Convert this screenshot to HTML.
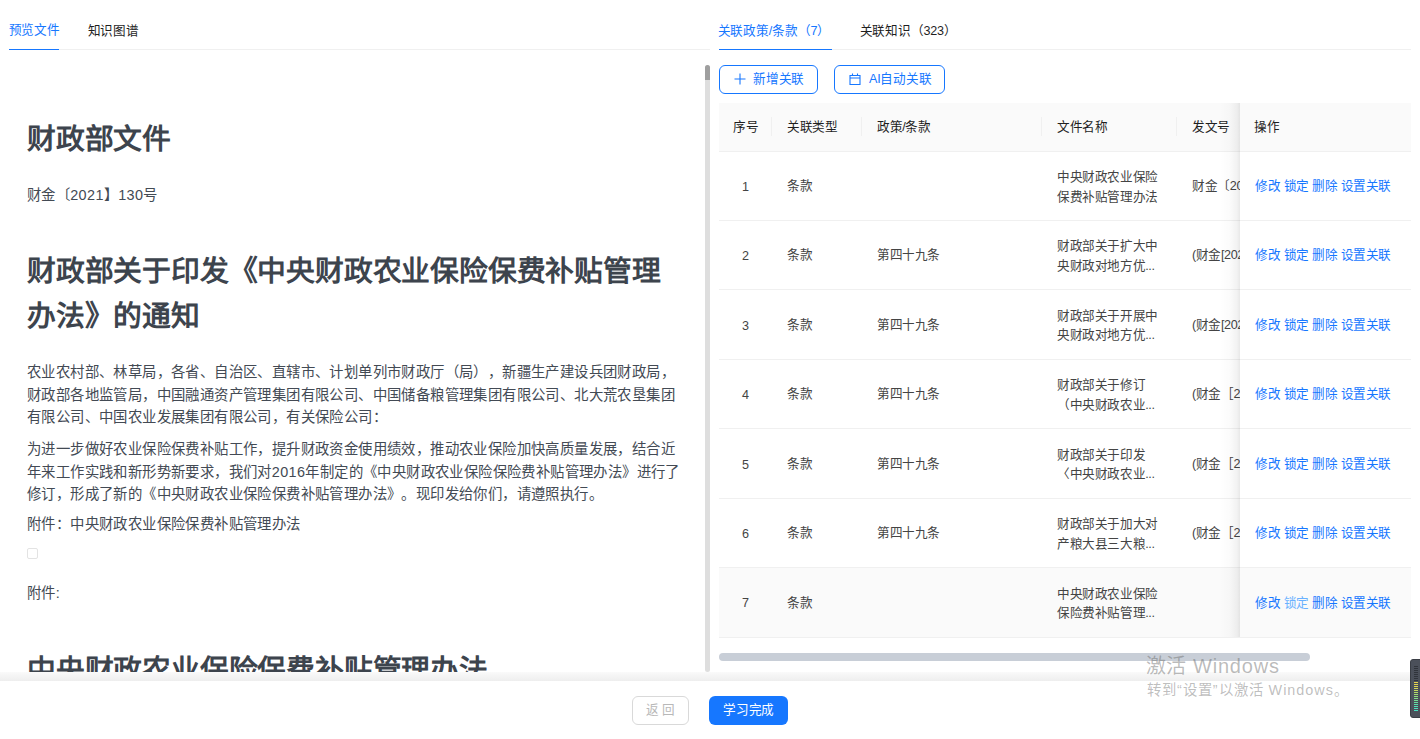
<!DOCTYPE html>
<html lang="zh-CN"><head><meta charset="utf-8">
<style>
*{margin:0;padding:0;box-sizing:border-box}
html,body{width:1420px;height:739px;overflow:hidden;background:#fff}
body{font-family:"Liberation Sans",sans-serif;position:relative;color:#1f1f1f;text-spacing-trim:space-all}
.a{position:absolute;white-space:nowrap}
.tab{font-size:12.6px;line-height:14px;letter-spacing:-0.2px}
.blue{color:#1677ff}
.p{font-size:14.4px;line-height:22.6px;color:#434a54;letter-spacing:0.4px}
.j{width:647px;text-align:justify;text-align-last:justify}
.h1{font-size:28.8px;line-height:45px;font-weight:bold;color:#3d444d;letter-spacing:-0.2px}
.th{font-size:12.6px;line-height:14px;color:#1f1f1f;letter-spacing:-0.4px}
.td{font-size:12.6px;line-height:14px;color:#444;letter-spacing:-0.4px}
.hl{position:absolute;height:1px;background:#f0f0f0}
.td2{font-size:12.6px;line-height:19.8px;color:#444;letter-spacing:-0.4px}
.ops{font-size:12.6px;line-height:14px;color:#1677ff;letter-spacing:-0.4px}
.ops span{margin-right:3.3px}
</style></head><body>
<div class="a tab blue" style="left:8.5px;top:23px">预览文件</div>
<div class="a tab" style="left:87.5px;top:23.5px">知识图谱</div>
<div class="hl" style="left:9px;top:49px;width:701px"></div>
<div class="a" style="left:9px;top:49px;width:50px;height:1px;background:#1677ff"></div>
<div class="a h1" style="left:27px;top:117px">财政部文件</div>
<div class="a p" style="left:27px;top:184px">财金〔2021】130号</div>
<div class="a h1" style="left:27px;top:249px">财政部关于印发《中央财政农业保险保费补贴管理</div>
<div class="a h1" style="left:27px;top:294px">办法》的通知</div>
<div class="a p j" style="left:27px;top:361px">农业农村部、林草局，各省、自治区、直辖市、计划单列市财政厅（局），新疆生产建设兵团财政局，</div>
<div class="a p j" style="left:27px;top:384px">财政部各地监管局，中国融通资产管理集团有限公司、中国储备粮管理集团有限公司、北大荒农垦集团</div>
<div class="a p" style="left:27px;top:406px">有限公司、中国农业发展集团有限公司，有关保险公司：</div>
<div class="a p j" style="left:27px;top:438px">为进一步做好农业保险保费补贴工作，提升财政资金使用绩效，推动农业保险加快高质量发展，结合近</div>
<div class="a p j" style="left:27px;top:461px">年来工作实践和新形势新要求，我们对2016年制定的《中央财政农业保险保险费补贴管理办法》进行了</div>
<div class="a p" style="left:27px;top:483px">修订，形成了新的《中央财政农业保险保费补贴管理办法》。现印发给你们，请遵照执行。</div>
<div class="a p" style="left:27px;top:513px">附件：中央财政农业保险保费补贴管理办法</div>
<div class="a" style="left:27px;top:548px;width:11px;height:11px;border:1px solid #e3e3e3;border-radius:2px"></div>
<div class="a p" style="left:27px;top:582px">附件:</div>
<div class="a" style="left:0;top:0;width:700px;height:672px;overflow:hidden"><div class="a h1" style="left:27px;top:648px">中央财政农业保险保费补贴管理办法</div></div>
<div class="a" style="left:705px;top:65px;width:5px;height:607px;background:#dedede;border-radius:3px"></div>
<div class="a" style="left:705px;top:65px;width:5px;height:15px;background:#9f9f9f;border-radius:3px 3px 0 0"></div>
<div class="a tab blue" style="left:717.5px;top:23.5px">关联政策/条款（7）</div>
<div class="a tab" style="left:859.5px;top:23.5px">关联知识（323）</div>
<div class="hl" style="left:719px;top:49px;width:692px"></div>
<div class="a" style="left:719px;top:49px;width:113px;height:1px;background:#1677ff"></div>
<div class="a" style="left:719px;top:65px;width:99px;height:29px;border:1px solid #1677ff;border-radius:6px"></div>
<div class="a tab blue" style="left:753px;top:72px">新增关联</div>
<div class="a" style="left:834px;top:65px;width:111px;height:29px;border:1px solid #1677ff;border-radius:6px"></div>
<div class="a tab blue" style="left:869px;top:72px">AI自动关联</div>
<div class="a" style="left:719px;top:103px;width:692px;height:48px;background:#fafafa"></div>
<div class="a th" style="left:733px;top:120px">序号</div>
<div class="a th" style="left:787px;top:120px">关联类型</div>
<div class="a th" style="left:877px;top:120px">政策/条款</div>
<div class="a th" style="left:1057px;top:120px">文件名称</div>
<div class="a th" style="left:1192px;top:120px">发文号</div>
<div class="a" style="left:771px;top:117px;width:1px;height:19px;background:#f0f0f0"></div>
<div class="a" style="left:861px;top:117px;width:1px;height:19px;background:#f0f0f0"></div>
<div class="a" style="left:1041px;top:117px;width:1px;height:19px;background:#f0f0f0"></div>
<div class="a" style="left:1176px;top:117px;width:1px;height:19px;background:#f0f0f0"></div>
<div class="a" style="left:1409px;top:117px;width:1px;height:19px;background:#f0f0f0"></div>
<div class="a" style="left:719px;top:568px;width:692px;height:69px;background:#fafafa"></div>
<div class="hl" style="left:719px;top:151px;width:692px"></div>
<div class="hl" style="left:719px;top:220px;width:692px"></div>
<div class="hl" style="left:719px;top:289px;width:692px"></div>
<div class="hl" style="left:719px;top:359px;width:692px"></div>
<div class="hl" style="left:719px;top:428px;width:692px"></div>
<div class="hl" style="left:719px;top:498px;width:692px"></div>
<div class="hl" style="left:719px;top:567px;width:692px"></div>
<div class="hl" style="left:719px;top:637px;width:692px"></div>
<div class="a" style="left:1176px;top:151px;width:64px;height:486px;overflow:hidden">
<div class="a td" style="left:16px;top:28.0px">财金〔2021】130号</div>
<div class="a td" style="left:16px;top:97.0px">(财金[2021]</div>
<div class="a td" style="left:16px;top:166.5px">(财金[2021]</div>
<div class="a td" style="left:16px;top:236.0px">(财金［2021］</div>
<div class="a td" style="left:16px;top:305.5px">(财金［2021］</div>
<div class="a td" style="left:16px;top:375.0px">(财金［2021］</div>
<div class="a td" style="left:16px;top:444.5px"></div>
</div>
<div class="a td" style="left:742px;top:180.0px">1</div>
<div class="a td" style="left:787px;top:179.0px">条款</div>
<div class="a td2" style="left:1057px;top:168.0px">中央财政农业保险<br>保费补贴管理办法</div>
<div class="a td" style="left:742px;top:249.0px">2</div>
<div class="a td" style="left:787px;top:248.0px">条款</div>
<div class="a td" style="left:877px;top:248.0px">第四十九条</div>
<div class="a td2" style="left:1057px;top:237.0px">财政部关于扩大中<br>央财政对地方优...</div>
<div class="a td" style="left:742px;top:318.5px">3</div>
<div class="a td" style="left:787px;top:317.5px">条款</div>
<div class="a td" style="left:877px;top:317.5px">第四十九条</div>
<div class="a td2" style="left:1057px;top:306.5px">财政部关于开展中<br>央财政对地方优...</div>
<div class="a td" style="left:742px;top:388.0px">4</div>
<div class="a td" style="left:787px;top:387.0px">条款</div>
<div class="a td" style="left:877px;top:387.0px">第四十九条</div>
<div class="a td2" style="left:1057px;top:376.0px">财政部关于修订<br>（中央财政农业...</div>
<div class="a td" style="left:742px;top:457.5px">5</div>
<div class="a td" style="left:787px;top:456.5px">条款</div>
<div class="a td" style="left:877px;top:456.5px">第四十九条</div>
<div class="a td2" style="left:1057px;top:445.5px">财政部关于印发<br>〈中央财政农业...</div>
<div class="a td" style="left:742px;top:527.0px">6</div>
<div class="a td" style="left:787px;top:526.0px">条款</div>
<div class="a td" style="left:877px;top:526.0px">第四十九条</div>
<div class="a td2" style="left:1057px;top:515.0px">财政部关于加大对<br>产粮大县三大粮...</div>
<div class="a td" style="left:742px;top:595.5px">7</div>
<div class="a td" style="left:787px;top:595.5px">条款</div>
<div class="a td2" style="left:1057px;top:584.5px">中央财政农业保险<br>保险费补贴管理...</div>
<div class="a" style="left:1220px;top:103px;width:20px;height:534px;background:linear-gradient(to right,rgba(0,0,0,0),rgba(0,0,0,0.015) 50%,rgba(0,0,0,0.05) 85%,rgba(0,0,0,0.09))"></div>
<div class="a" style="left:1240px;top:103px;width:171px;height:48px;background:#fafafa"></div>
<div class="a th" style="left:1254px;top:120px">操作</div>
<div class="a" style="left:1240px;top:152px;width:171px;height:68px;background:#fff"></div>
<div class="a ops" style="left:1255px;top:179.0px"><span>修改</span><span>锁定</span><span>删除</span><span>设置关联</span></div>
<div class="a" style="left:1240px;top:221px;width:171px;height:68px;background:#fff"></div>
<div class="a ops" style="left:1255px;top:248.0px"><span>修改</span><span>锁定</span><span>删除</span><span>设置关联</span></div>
<div class="a" style="left:1240px;top:290px;width:171px;height:69px;background:#fff"></div>
<div class="a ops" style="left:1255px;top:317.5px"><span>修改</span><span>锁定</span><span>删除</span><span>设置关联</span></div>
<div class="a" style="left:1240px;top:360px;width:171px;height:68px;background:#fff"></div>
<div class="a ops" style="left:1255px;top:387.0px"><span>修改</span><span>锁定</span><span>删除</span><span>设置关联</span></div>
<div class="a" style="left:1240px;top:429px;width:171px;height:69px;background:#fff"></div>
<div class="a ops" style="left:1255px;top:456.5px"><span>修改</span><span>锁定</span><span>删除</span><span>设置关联</span></div>
<div class="a" style="left:1240px;top:499px;width:171px;height:68px;background:#fff"></div>
<div class="a ops" style="left:1255px;top:526.0px"><span>修改</span><span>锁定</span><span>删除</span><span>设置关联</span></div>
<div class="a" style="left:1240px;top:568px;width:171px;height:69px;background:#fafafa"></div>
<div class="a ops" style="left:1255px;top:595.5px"><span>修改</span><span style="color:#69b1ff">锁定</span><span>删除</span><span>设置关联</span></div>
<svg class="a" style="left:729px;top:68px" width="22" height="22" viewBox="0 0 22 22"><path d="M5.5 11H16.5M11 5.5V16.5" stroke="#1677ff" stroke-width="1.1" fill="none"/></svg>
<svg class="a" style="left:844px;top:68px" width="22" height="22" viewBox="0 0 22 22"><path d="M6 7.5H16V16.5H6Z M6 10H16 M8.5 5.5V8 M13.5 5.5V8" stroke="#1677ff" stroke-width="1.1" fill="none"/></svg>
<div class="a" style="left:719px;top:653px;width:591px;height:8px;background:#c8ced7;border-radius:4px"></div>
<div class="a" style="left:0;top:672px;width:1420px;height:9px;background:linear-gradient(to bottom,#fafafa,#eeeeee)"></div>
<div class="a" style="left:0;top:681px;width:1420px;height:58px;background:#fff"></div>
<div class="a" style="left:632px;top:696px;width:57px;height:29px;border:1px solid #d9d9d9;border-radius:6px"></div>
<div class="a tab" style="left:646px;top:702.5px;color:#b8b8b8;letter-spacing:3px">返回</div>
<div class="a" style="left:709px;top:696px;width:79px;height:29px;background:#1677ff;border-radius:6px"></div>
<div class="a tab" style="left:723px;top:702.5px;color:#fff">学习完成</div>
<div class="a" style="left:1146px;top:654px;font-size:20px;line-height:24px;color:rgba(110,110,110,0.47)">激活<span style="margin-left:7px;letter-spacing:0.8px">Windows</span></div>
<div class="a" style="left:1147px;top:680.5px;font-size:14.4px;line-height:18px;color:rgba(110,110,110,0.45);letter-spacing:1px">转到“设置”以激活 Windows。</div>
<div class="a" style="left:1410px;top:659px;width:14px;height:59px;background:#4b505a;border:1px solid #3a3e45;border-radius:3px"><div style="position:absolute;left:3px;top:6px;width:4px;height:1.3px;background:#30343b"></div><div style="position:absolute;left:3px;top:8px;width:4px;height:1.3px;background:#30343b"></div><div style="position:absolute;left:3px;top:10px;width:4px;height:1.3px;background:#30343b"></div><div style="position:absolute;left:3px;top:12px;width:4px;height:1.3px;background:#30343b"></div><div style="position:absolute;left:3px;top:14px;width:4px;height:1.3px;background:#30343b"></div><div style="position:absolute;left:3px;top:16px;width:4px;height:1.3px;background:#30343b"></div><div style="position:absolute;left:3px;top:18px;width:4px;height:1.3px;background:#30343b"></div><div style="position:absolute;left:3px;top:20px;width:4px;height:1.3px;background:#30343b"></div><div style="position:absolute;left:3px;top:22px;width:4px;height:1.3px;background:#e8d44d"></div><div style="position:absolute;left:3px;top:24px;width:4px;height:1.3px;background:#e3d54f"></div><div style="position:absolute;left:3px;top:26px;width:4px;height:1.3px;background:#dcd653"></div><div style="position:absolute;left:3px;top:28px;width:4px;height:1.3px;background:#d2d858"></div><div style="position:absolute;left:3px;top:30px;width:4px;height:1.3px;background:#c6d95e"></div><div style="position:absolute;left:3px;top:32px;width:4px;height:1.3px;background:#b4db67"></div><div style="position:absolute;left:3px;top:34px;width:4px;height:1.3px;background:#a3dc71"></div><div style="position:absolute;left:3px;top:36px;width:4px;height:1.3px;background:#92dd7c"></div><div style="position:absolute;left:3px;top:38px;width:4px;height:1.3px;background:#83de87"></div><div style="position:absolute;left:3px;top:40px;width:4px;height:1.3px;background:#74df93"></div><div style="position:absolute;left:3px;top:42px;width:4px;height:1.3px;background:#66df9f"></div><div style="position:absolute;left:3px;top:44px;width:4px;height:1.3px;background:#5ae0aa"></div><div style="position:absolute;left:3px;top:46px;width:4px;height:1.3px;background:#52e0b4"></div><div style="position:absolute;left:3px;top:48px;width:4px;height:1.3px;background:#4de0bc"></div><div style="position:absolute;left:3px;top:50px;width:4px;height:1.3px;background:#4ae0c2"></div></div>
</body></html>
